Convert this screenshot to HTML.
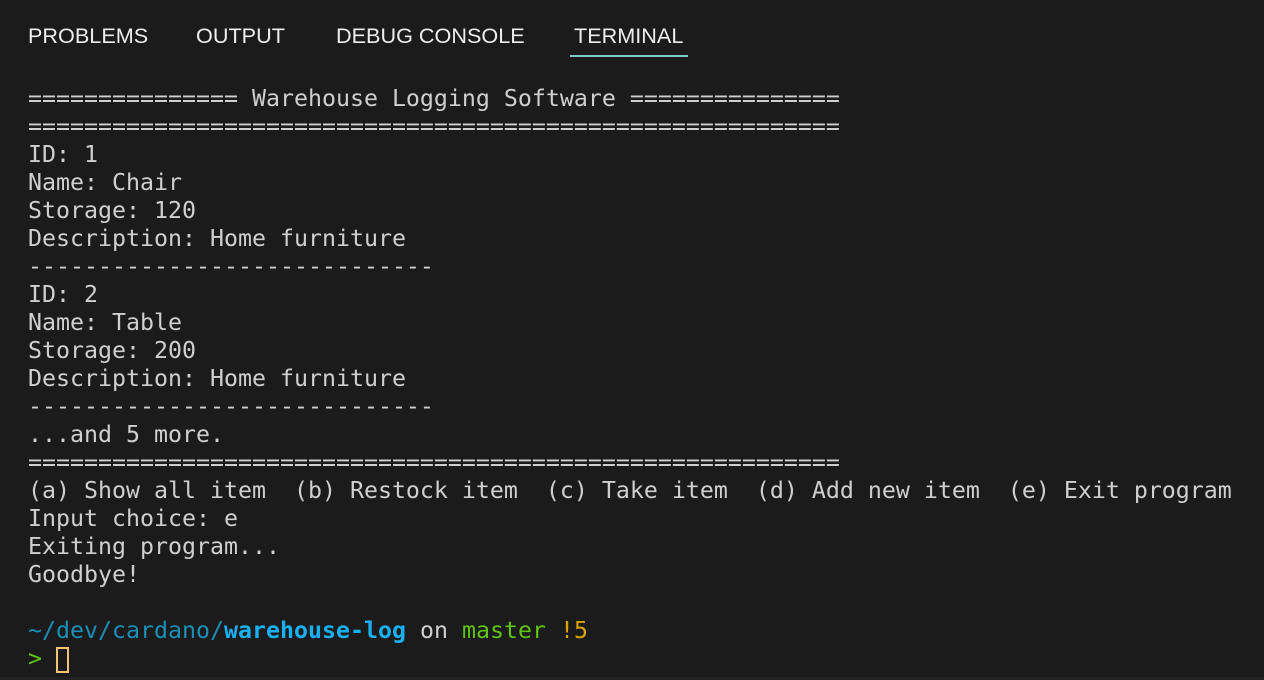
<!DOCTYPE html>
<html><head><meta charset="utf-8"><style>
html,body{margin:0;padding:0;background:#1b1b1b;width:1264px;height:680px;overflow:hidden}
.tabs{position:absolute;top:0;left:0;width:1264px;height:70px}
.tab{position:absolute;top:25px;font-family:"Liberation Sans",sans-serif;font-size:21px;color:#ededed;line-height:24px;transform-origin:left;transform:scaleX(1.03)}
.ul{position:absolute;left:570px;top:55px;width:118px;height:2px;background:#7fcfc4}
pre{position:absolute;left:28px;top:85px;margin:0;font-family:"DejaVu Sans Mono","Liberation Mono",monospace;font-size:23.25px;line-height:28px;color:#cfcfcf;white-space:pre}
.c1{color:#1a8fb8}.c2{color:#1ab0f0;font-weight:bold}.g{color:#5fc40f}.y{color:#d9a400}
.cur{display:inline-block;width:13px;height:26px;border:2px solid #f4c470;vertical-align:-7px;box-sizing:border-box}
.bot{position:absolute;left:0;top:677px;width:1264px;height:3px;background:#232323}
</style></head><body>
<div class="tabs">
<div class="tab" style="left:28px">PROBLEMS</div>
<div class="tab" style="left:196px">OUTPUT</div>
<div class="tab" style="left:336px">DEBUG CONSOLE</div>
<div class="tab" style="left:574px">TERMINAL</div>
<div class="ul"></div>
</div>
<pre>=============== Warehouse Logging Software ===============
==========================================================
ID: 1
Name: Chair
Storage: 120
Description: Home furniture
-----------------------------
ID: 2
Name: Table
Storage: 200
Description: Home furniture
-----------------------------
...and 5 more.
==========================================================
(a) Show all item  (b) Restock item  (c) Take item  (d) Add new item  (e) Exit program
Input choice: e
Exiting program...
Goodbye!

<span class="c1">~/dev/cardano/</span><span class="c2">warehouse-log</span> on <span class="g">master</span> <span class="y">!5</span>
<span class="g">&gt;</span> <span class="cur"></span></pre>
<div class="bot"></div>
</body></html>
